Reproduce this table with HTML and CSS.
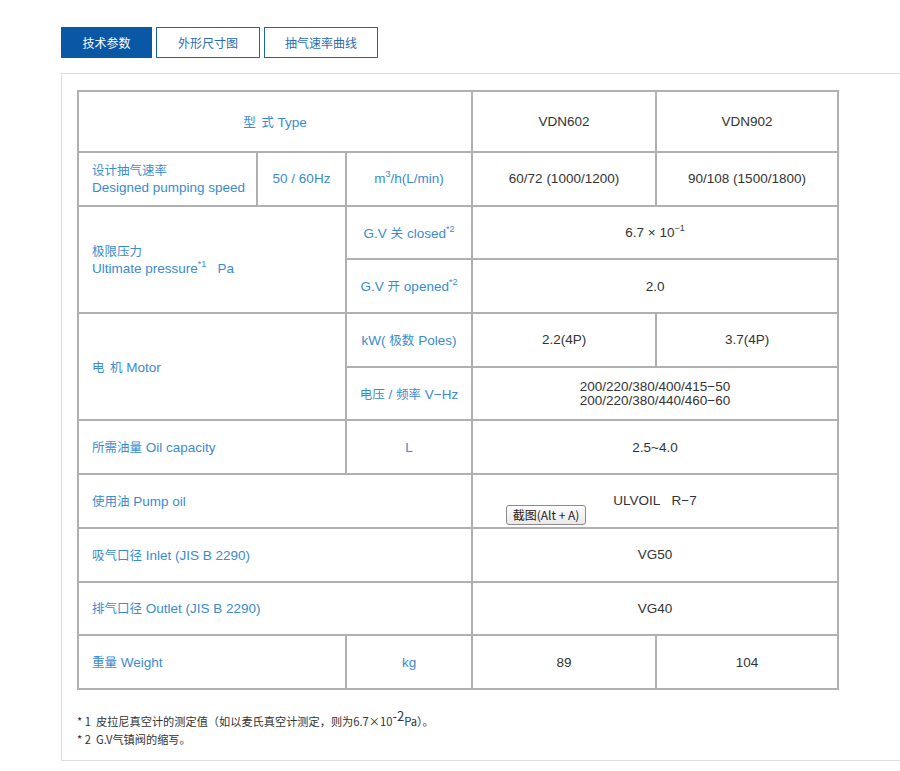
FILE: index.html
```html
<!DOCTYPE html>
<html lang="zh-CN">
<head>
<meta charset="utf-8">
<title>技术参数</title>
<link rel="stylesheet" href="styles.css">
</head>
<body>
<div class="page">
  <div class="tabs">
    <a class="tab tab-active">技术参数</a>
    <a class="tab tab-2">外形尺寸图</a>
    <a class="tab tab-3">抽气速率曲线</a>
  </div>
  <div class="panel">
    <table class="spec">
      <colgroup>
        <col class="c1"><col class="c2"><col class="c3"><col class="c4"><col class="c5">
      </colgroup>
      <tr class="r-head">
        <td colspan="3" class="lbl center"><span class="zh">型&nbsp; 式</span> Type</td>
        <td class="val">VDN602</td>
        <td class="val">VDN902</td>
      </tr>
      <tr>
        <td class="lbl"><span class="zh">设计抽气速率</span><br>Designed pumping speed</td>
        <td class="lbl center">50 / 60Hz</td>
        <td class="lbl center">m<sup class="s">3</sup>/h(L/min)</td>
        <td class="val">60/72 (1000/1200)</td>
        <td class="val">90/108 (1500/1800)</td>
      </tr>
      <tr>
        <td colspan="2" rowspan="2" class="lbl"><span class="zh">极限压力</span><br>Ultimate pressure<sup class="s">*1</sup>&nbsp;&nbsp; Pa</td>
        <td class="lbl center">G.V <span class="zh">关</span> closed<sup class="s">*2</sup></td>
        <td colspan="2" class="val">6.7 × 10<sup class="s">−1</sup></td>
      </tr>
      <tr>
        <td class="lbl center">G.V <span class="zh">开</span> opened<sup class="s">*2</sup></td>
        <td colspan="2" class="val">2.0</td>
      </tr>
      <tr>
        <td colspan="2" rowspan="2" class="lbl"><span class="zh">电&nbsp; 机</span> Motor</td>
        <td class="lbl center">kW( <span class="zh">极数</span> Poles)</td>
        <td class="val">2.2(4P)</td>
        <td class="val">3.7(4P)</td>
      </tr>
      <tr>
        <td class="lbl center"><span class="zh">电压</span> / <span class="zh">频率</span> V−Hz</td>
        <td colspan="2" class="val tight">200/220/380/400/415−50<br>200/220/380/440/460−60</td>
      </tr>
      <tr>
        <td colspan="2" class="lbl"><span class="zh">所需油量</span> Oil capacity</td>
        <td class="lbl center">L</td>
        <td colspan="2" class="val">2.5~4.0</td>
      </tr>
      <tr>
        <td colspan="3" class="lbl"><span class="zh">使用油</span> Pump oil</td>
        <td colspan="2" class="val">ULVOIL&nbsp;&nbsp; R−7</td>
      </tr>
      <tr>
        <td colspan="3" class="lbl"><span class="zh">吸气口径</span> Inlet (JIS B 2290)</td>
        <td colspan="2" class="val">VG50</td>
      </tr>
      <tr>
        <td colspan="3" class="lbl"><span class="zh">排气口径</span> Outlet (JIS B 2290)</td>
        <td colspan="2" class="val">VG40</td>
      </tr>
      <tr>
        <td colspan="2" class="lbl"><span class="zh">重量</span> Weight</td>
        <td class="lbl center">kg</td>
        <td class="val">89</td>
        <td class="val">104</td>
      </tr>
    </table>
    <div class="notes">
      <p>* 1&nbsp; 皮拉尼真空计的测定值（如以麦氏真空计测定，则为6.7×10<sup class="big">-2</sup>Pa）。</p>
      <p>* 2&nbsp; G.V气镇阀的缩写。</p>
    </div>
  </div>
  <div class="shot-btn">截图(Alt + A)</div>
</div>
</body>
</html>
```
FILE: styles.css
```css
html, body {
  margin: 0;
  padding: 0;
  background: #fff;
  overflow: hidden;
}
body {
  font-family: "Liberation Sans", Arial, "Noto Sans CJK SC", sans-serif;
  width: 900px;
  height: 771px;
}
.page {
  position: relative;
  padding: 27px 0 0 61px;
}
.tabs {
  display: flex;
  gap: 4px;
  height: 31px;
}
.tab {
  box-sizing: border-box;
  display: flex;
  align-items: center;
  justify-content: center;
  height: 31px;
  border: 1px solid #1d63ae;
  color: #2a6ab2;
  background: #fff;
  font-family: "Noto Sans CJK SC", sans-serif;
  font-size: 12px;
}
.tab-active {
  width: 91px;
  background: #0a57a5;
  border-color: #0a57a5;
  color: #fff;
}
.tab-2 { width: 104px; }
.tab-3 { width: 114px; }
.panel {
  box-sizing: border-box;
  margin-top: 15px;
  width: 860px;
  height: 688px;
  border: 1px solid #dcdcdc;
  border-right: none;
  padding: 16px 0 0 15px;
}
.spec {
  border-collapse: collapse;
  table-layout: fixed;
  width: 760px;
  font-size: 13.5px;
  border: 2px solid #a8a8a8;
}
.c1 { width: 179px; }
.c2 { width: 89px; }
.c3 { width: 126px; }
.c4 { width: 184px; }
.c5 { width: 182px; }
.spec tr { height: 53.7px; }
.spec tr.r-head { height: 61px; }
.spec td {
  border: 2px solid #b0b0b0;
  padding: 0;
  vertical-align: middle;
  line-height: 17px;
}
.zh {
  font-family: "Noto Sans CJK SC", sans-serif;
  font-size: 12.5px;
}
.lbl {
  color: #3a8bd0;
  padding-left: 13px !important;
}
.lbl.center {
  text-align: center;
  padding-left: 0 !important;
}
.val {
  color: #333;
  text-align: center;
}
.val.tight { line-height: 14px; }
sup.s {
  font-size: 9px;
  line-height: 0;
  vertical-align: 6px;
}
.notes {
  margin-top: 22px;
  font-family: "Noto Sans CJK SC", sans-serif;
  font-size: 11.2px;
  color: #333;
}
.notes p {
  margin: 0;
  line-height: 18px;
}
sup.big {
  font-size: 13px;
  line-height: 0;
  vertical-align: 5px;
}
.shot-btn {
  position: absolute;
  left: 506px;
  top: 505px;
  box-sizing: border-box;
  width: 80px;
  height: 20px;
  border: 1px solid #8a8a8a;
  border-radius: 3px;
  background: linear-gradient(#fdfdfd, #e9e9e9);
  font-family: "Noto Sans CJK SC", sans-serif;
  font-size: 12px;
  line-height: 18px;
  color: #222;
  text-align: center;
}
```
